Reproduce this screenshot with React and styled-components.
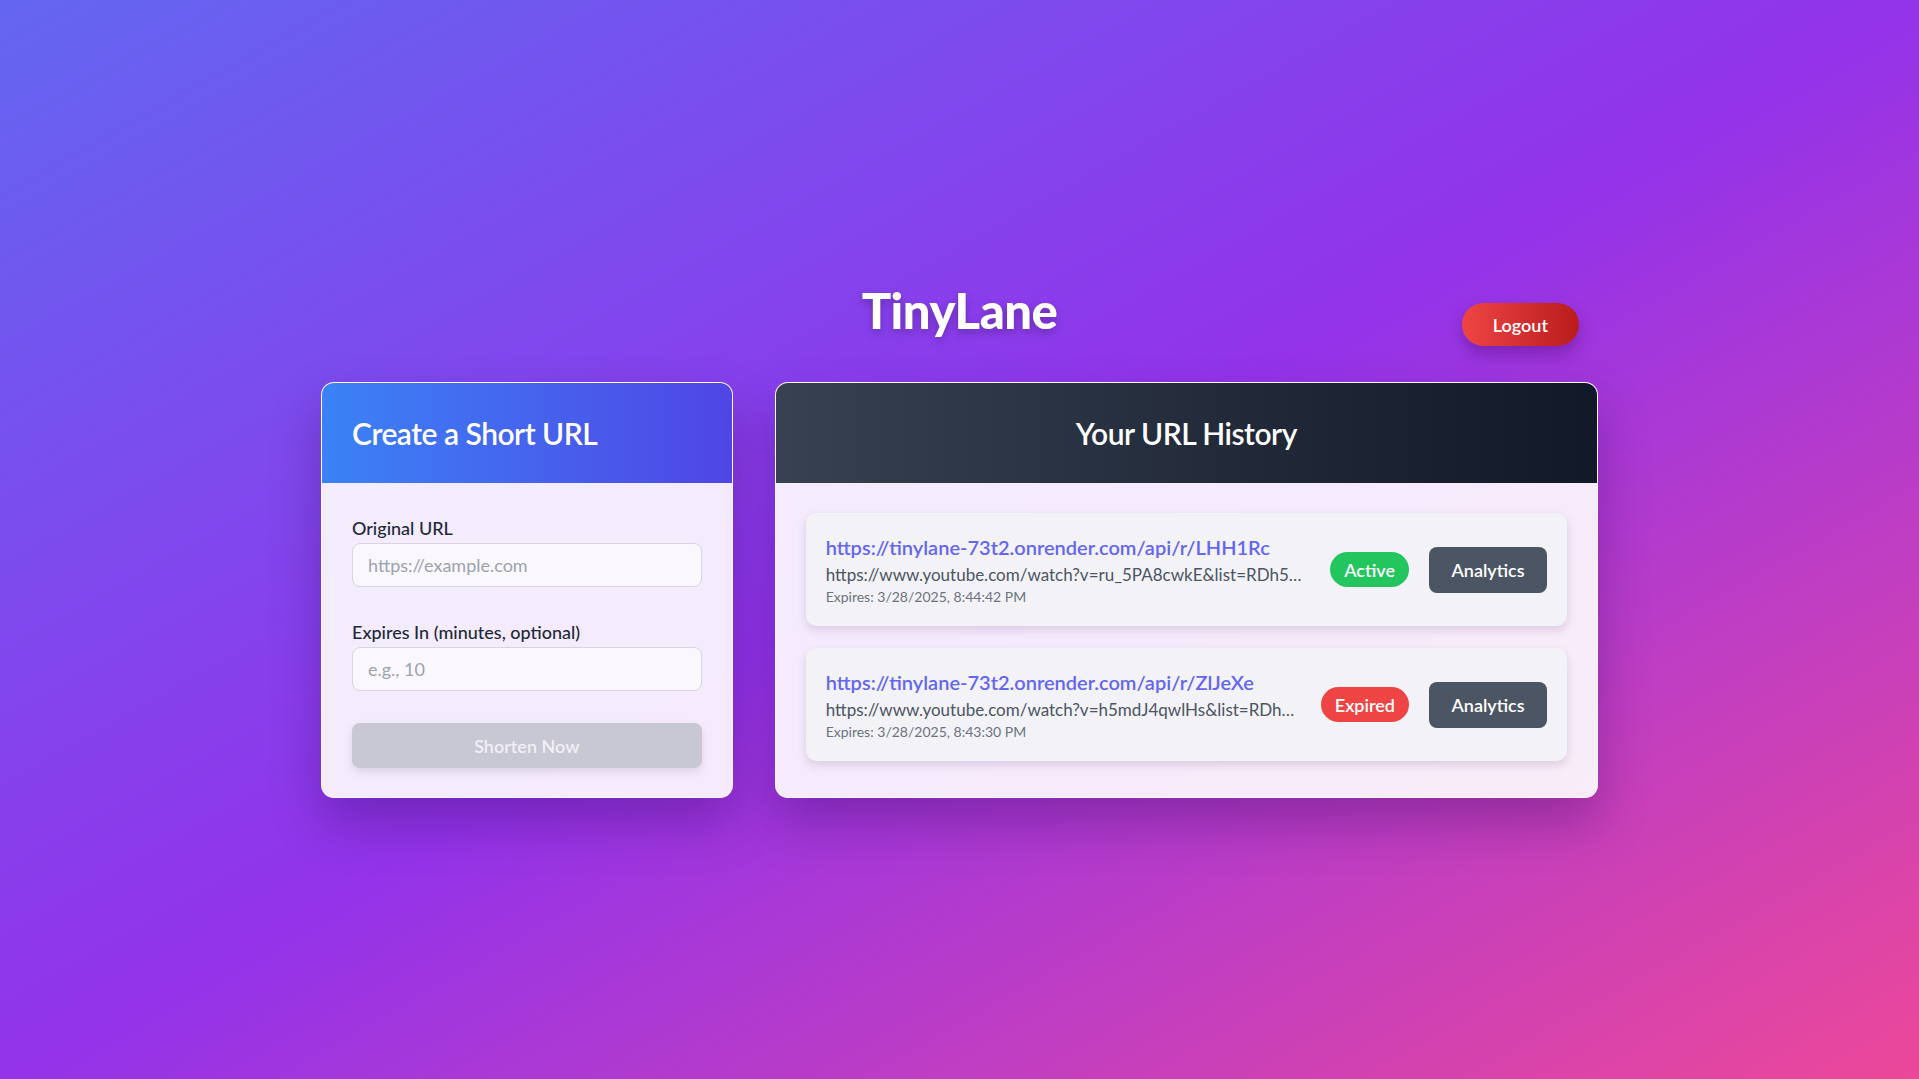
import React from 'react';
import styled, { createGlobalStyle } from 'styled-components';

const GlobalStyle = createGlobalStyle`
  * {
    box-sizing: border-box;
  }
  html, body {
    margin: 0;
    padding: 0;
  }
  body {
    font-family: Lato, 'Open Sans', sans-serif;
    background: linear-gradient(to bottom right, #6366f1, #9333ea, #ec4899);
    min-height: 100vh;
  }
`;

const Page = styled.div`
  min-height: 100vh;
  display: flex;
  align-items: center;
  justify-content: center;
`;

const Wrapper = styled.div`
  width: 1277px;
  display: flex;
  flex-direction: column;
`;

const Header = styled.header`
  display: grid;
  grid-template-columns: 1fr auto 1fr;
  align-items: start;
  margin-bottom: 36px;
`;

const Title = styled.h1`
  grid-column: 2;
  margin: 0;
  font-size: 49px;
  line-height: 1.2;
  font-weight: 900;
  color: #ffffff;
  letter-spacing: -0.5px;
  text-shadow: 0 4px 8px rgba(0, 0, 0, 0.25);
`;

const LogoutButton = styled.button`
  grid-column: 3;
  justify-self: end;
  margin-top: 22px;
  margin-right: 19px;
  height: 43px;
  padding: 0 31px;
  border: none;
  border-radius: 999px;
  background: linear-gradient(to right, #ef4444, #b91c1c);
  color: #ffffff;
  font-family: inherit;
  font-size: 18px;
  font-weight: 600;
  box-shadow: 0 8px 16px rgba(60, 0, 90, 0.35);
  cursor: pointer;
`;

const Grid = styled.div`
  display: grid;
  grid-template-columns: 1fr 2fr;
  gap: 42px;
`;

const Card = styled.section`
  display: flex;
  flex-direction: column;
  background: rgba(255, 255, 255, 0.9);
  border: 1px solid rgba(255, 255, 255, 0.7);
  border-radius: 13px;
  overflow: hidden;
  box-shadow: 0 25px 50px rgba(40, 0, 80, 0.3);
`;

const CardHeader = styled.div`
  height: 100px;
  display: flex;
  align-items: center;
  justify-content: ${(props) => (props.center ? 'center' : 'flex-start')};
  padding: 0 30px;
  background: ${(props) =>
    props.dark
      ? 'linear-gradient(to right, #374151, #111827)'
      : 'linear-gradient(to right, #3b82f6, #4f46e5)'};
`;

const CardTitle = styled.h2`
  margin: 0;
  font-size: 30px;
  font-weight: 600;
  color: #ffffff;
  letter-spacing: -0.5px;
`;

const CardBody = styled.div`
  flex: 1;
  display: flex;
  flex-direction: column;
  padding: ${(props) => (props.list ? '30px 30px 30px' : '32px 30px 29px')};
  gap: ${(props) => (props.list ? '22px' : '0')};
`;

const Field = styled.div`
  display: flex;
  flex-direction: column;
  margin-bottom: 32px;
`;

const Label = styled.label`
  font-size: 18px;
  line-height: 27px;
  font-weight: 500;
  color: #1f2937;
  margin-bottom: 1px;
`;

const Input = styled.input`
  height: 44px;
  padding: 0 15px;
  border: 1px solid #d9d4e0;
  border-radius: 8px;
  background: #faf7fd;
  font-family: inherit;
  font-size: 18px;
  color: #1f2937;
  outline: none;

  &::placeholder {
    color: #9ca3af;
  }
`;

const SubmitButton = styled.button`
  height: 45px;
  border: none;
  border-radius: 8px;
  background: #c8c7d4;
  color: #f1f0f6;
  font-family: inherit;
  font-size: 18px;
  font-weight: 600;
  box-shadow: 0 4px 8px rgba(0, 0, 0, 0.1);
`;

const Item = styled.div`
  height: 113px;
  display: flex;
  align-items: center;
  gap: 20px;
  padding: 20px;
  background: #f3f2f7;
  border-radius: 10px;
  box-shadow: 0 4px 10px rgba(60, 20, 90, 0.15);
`;

const ItemText = styled.div`
  flex: 1;
  min-width: 0;
  display: flex;
  flex-direction: column;
`;

const ShortLink = styled.a`
  font-size: 20px;
  line-height: 30px;
  font-weight: 600;
  color: #6366f1;
  text-decoration: none;
  white-space: nowrap;
  overflow: hidden;
  text-overflow: ellipsis;
`;

const LongUrl = styled.div`
  font-size: 17px;
  line-height: 25px;
  color: #4b5563;
  white-space: nowrap;
  overflow: hidden;
  text-overflow: ellipsis;
`;

const Expiry = styled.div`
  font-size: 14px;
  line-height: 20px;
  color: #6b7280;
`;

const Badge = styled.span`
  flex-shrink: 0;
  height: 35px;
  display: flex;
  align-items: center;
  padding: 0 14px;
  border-radius: 999px;
  background: ${(props) => (props.expired ? '#ef4444' : '#22c55e')};
  color: #ffffff;
  font-size: 18px;
  font-weight: 600;
`;

const AnalyticsButton = styled.button`
  flex-shrink: 0;
  width: 118px;
  height: 46px;
  border: none;
  border-radius: 8px;
  background: #4b5563;
  color: #ffffff;
  font-family: inherit;
  font-size: 18px;
  font-weight: 600;
  cursor: pointer;
`;

const urls = [
  {
    id: 'LHH1Rc',
    short: 'https://tinylane-73t2.onrender.com/api/r/LHH1Rc',
    original: 'https://www.youtube.com/watch?v=ru_5PA8cwkE&list=RDh5mdJ4qwlHs&index=3',
    expires: '3/28/2025, 8:44:42 PM',
    expired: false,
  },
  {
    id: 'ZlJeXe',
    short: 'https://tinylane-73t2.onrender.com/api/r/ZlJeXe',
    original: 'https://www.youtube.com/watch?v=h5mdJ4qwlHs&list=RDh5mdJ4qwlHs&start_radio=1',
    expires: '3/28/2025, 8:43:30 PM',
    expired: true,
  },
];

export default function App() {
  return (
    <>
      <GlobalStyle />
      <Page>
        <Wrapper>
          <Header>
            <Title>TinyLane</Title>
            <LogoutButton>Logout</LogoutButton>
          </Header>
          <Grid>
            <Card>
              <CardHeader>
                <CardTitle>Create a Short URL</CardTitle>
              </CardHeader>
              <CardBody>
                <Field>
                  <Label>Original URL</Label>
                  <Input placeholder="https://example.com" />
                </Field>
                <Field>
                  <Label>Expires In (minutes, optional)</Label>
                  <Input placeholder="e.g., 10" />
                </Field>
                <SubmitButton disabled>Shorten Now</SubmitButton>
              </CardBody>
            </Card>
            <Card>
              <CardHeader dark center>
                <CardTitle>Your URL History</CardTitle>
              </CardHeader>
              <CardBody list>
                {urls.map((u) => (
                  <Item key={u.id}>
                    <ItemText>
                      <ShortLink href="#">{u.short}</ShortLink>
                      <LongUrl>{u.original}</LongUrl>
                      <Expiry>Expires: {u.expires}</Expiry>
                    </ItemText>
                    <Badge expired={u.expired}>{u.expired ? 'Expired' : 'Active'}</Badge>
                    <AnalyticsButton>Analytics</AnalyticsButton>
                  </Item>
                ))}
              </CardBody>
            </Card>
          </Grid>
        </Wrapper>
      </Page>
    </>
  );
}
